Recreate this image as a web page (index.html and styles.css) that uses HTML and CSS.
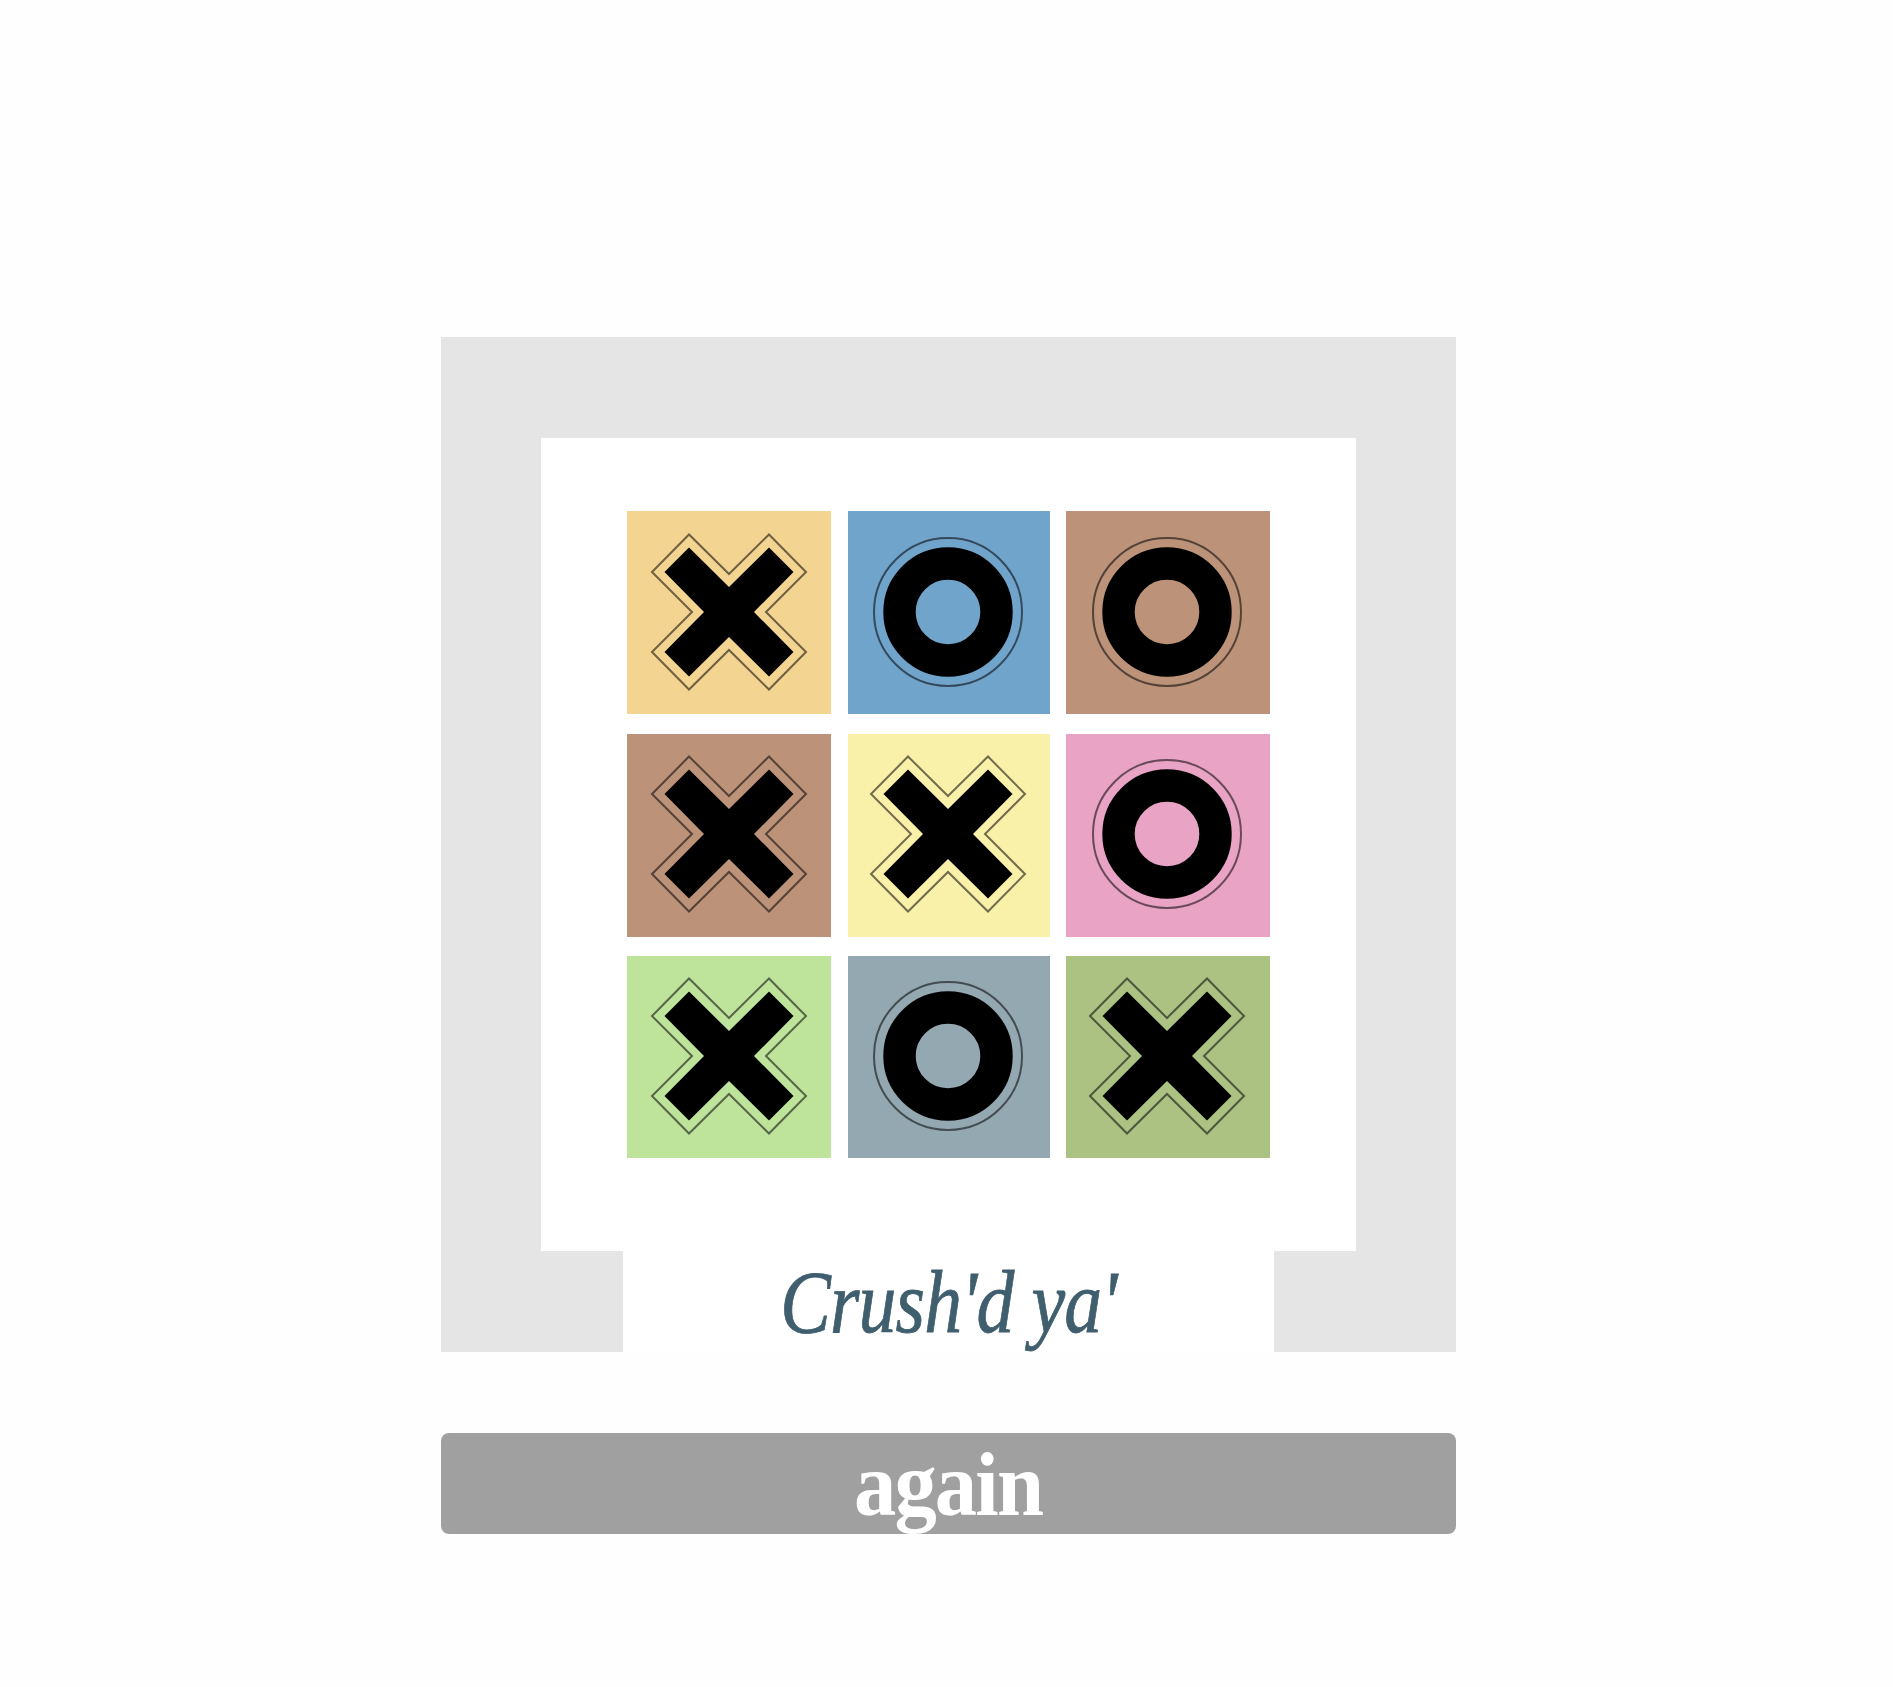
FILE: index.html
```html
<!DOCTYPE html>
<html lang="en">
<head>
    <meta charset="UTF-8">
    <meta name="viewport" content="width=device-width, initial-scale=1.0">
    <title>Tic Tac Toe</title>
    <link rel="stylesheet" href="styles.css">
</head>
<body>
    <svg class="defs" width="0" height="0" aria-hidden="true">
        <symbol id="mark-x" viewBox="-102 -102 204 204">
            <polygon class="mark-line" points="0,-38 40,-77.5 77,-40 37,0 77,40 40,77.5 0,38 -40,77.5 -77,40 -37,0 -77,-40 -40,-77.5"/>
            <polygon points="0,-25 40,-64.5 64.5,-40 25,0 64.5,40 40,64.5 0,25 -40,64.5 -64.5,40 -25,0 -64.5,-40 -40,-64.5"/>
        </symbol>
        <symbol id="mark-o" viewBox="-102 -102 204 204">
            <circle class="mark-line" r="74"/>
            <circle class="mark-ring" r="48.5"/>
        </symbol>
    </svg>

    <main class="game">
        <div class="frame">
            <div class="board">
                <div class="grid">
                    <div class="cell sand"><svg class="mark"><use href="#mark-x"/></svg></div>
                    <div class="cell blue"><svg class="mark"><use href="#mark-o"/></svg></div>
                    <div class="cell brown"><svg class="mark"><use href="#mark-o"/></svg></div>
                    <div class="cell brown"><svg class="mark"><use href="#mark-x"/></svg></div>
                    <div class="cell yellow"><svg class="mark"><use href="#mark-x"/></svg></div>
                    <div class="cell pink"><svg class="mark"><use href="#mark-o"/></svg></div>
                    <div class="cell lime"><svg class="mark"><use href="#mark-x"/></svg></div>
                    <div class="cell slate"><svg class="mark"><use href="#mark-o"/></svg></div>
                    <div class="cell olive"><svg class="mark"><use href="#mark-x"/></svg></div>
                </div>
            </div>
            <div class="caption"><span class="caption-text">Crush'd ya'</span></div>
        </div>
        <button class="again"><span class="again-text">again</span></button>
    </main>
</body>
</html>
```

FILE: styles.css
```css
body {
    margin: 0;
    padding: 337px 0 0 4px;
    background-color: #fefefe;
    display: flex;
    flex-direction: column;
    align-items: center;
    min-height: 1350px;
}
.defs {
    position: absolute;
}
.game {
    width: 1015px;
}
.frame {
    background: #e5e5e5;
    padding: 101px 100px 0;
}
.board {
    background: #fff;
    height: 740px;
    padding: 73px 0 0 86px;
}
.grid {
    display: grid;
    grid-template-columns: 204px 202px 203.5px;
    grid-template-rows: 203px 203px 202px;
    column-gap: 16.5px;
    row-gap: 19.5px;
}
.cell {
    display: flex;
    align-items: center;
    justify-content: center;
}
.mark {
    width: 204px;
    height: 204px;
    flex: none;
    margin: 0 1px 2px 0;
}
.mark-line {
    fill: none;
    stroke: rgba(0, 0, 0, 0.55);
    stroke-width: 2;
}
.mark-ring {
    fill: none;
    stroke: #000;
    stroke-width: 32.4;
}
.sand { background: #f3d491; }
.blue { background: #70a4cb; }
.brown { background: #bc9279; }
.yellow { background: #f9f0a9; }
.pink { background: #e9a3c5; }
.lime { background: #bee39b; }
.slate { background: #94a8b1; }
.olive { background: #abc283; }
.caption {
    width: 651px;
    height: 101px;
    margin: 0 auto;
    background: #fff;
    text-align: center;
    font-family: "Liberation Serif", serif;
    font-style: italic;
    font-size: 88px;
    line-height: 104px;
    color: #3f5e6e;
    letter-spacing: -1px;
}
.caption-text {
    display: inline-block;
    transform: scaleX(0.86);
    -webkit-text-stroke: 0.8px #3f5e6e;
}
.again {
    display: block;
    width: 100%;
    height: 101px;
    margin-top: 81px;
    padding: 7px 0 4px;
    border: none;
    border-radius: 8px;
    background-color: #a0a0a0;
    color: #fff;
    font-family: "Liberation Serif", serif;
    font-weight: bold;
    font-size: 90px;
    line-height: 90px;
    letter-spacing: -2px;
    cursor: pointer;
}
.again-text {
    display: inline-block;
    transform: scaleX(0.94);
}
```
